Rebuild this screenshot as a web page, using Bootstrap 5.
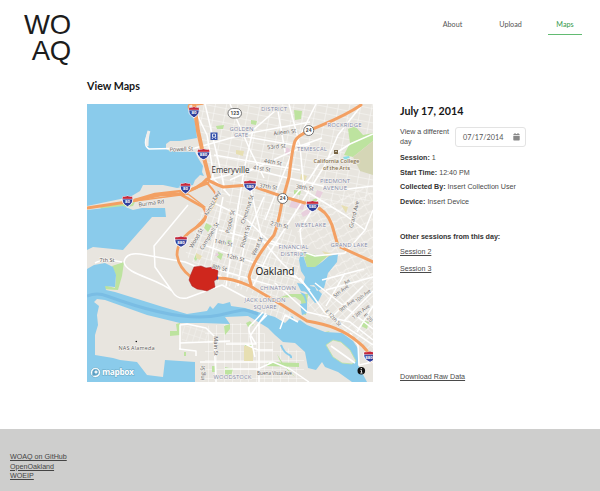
<!DOCTYPE html>
<html lang="en">
<head>
<meta charset="utf-8">
<meta name="viewport" content="width=device-width, initial-scale=1">
<title>WOAQ - View Maps</title>
<link href="https://cdn.jsdelivr.net/npm/bootstrap@5.3.0/dist/css/bootstrap.min.css" rel="stylesheet">
<style>
body{font-family:"Liberation Sans",Arial,sans-serif;font-size:7.15px;color:#4a4a4a;line-height:10px;min-height:491px;overflow:hidden}
header{height:79px;padding:12px 18px 0 22px}
.brand{font-size:27.500px;line-height:26px;color:#1c1c1c;width:49px;letter-spacing:-.2px}
.site-nav{font:7.2px/10px Lato,sans-serif;gap:17px}
.site-nav .nav-link{padding:8px 0 5px;width:41px;text-align:center;color:#555;height:23px;transition:none}
.site-nav .nav-link.active{color:#35994b;border-bottom:1.500px solid #62bb72;width:34px}
h1,h2{font-family:Lato,sans-serif;font-weight:700;color:#161616;margin:0}
h1{font-size:10.700px;line-height:14px;margin-bottom:11px}
h2{font-size:10.700px;line-height:14px}
main{padding-left:87px;height:350px}
.map-box{width:286px;height:278px;flex:none}
.map-box svg{display:block}
.session-panel{width:140px;height:278px;margin-left:27px}
.day-row{margin-top:9px;height:26px}
.day-label{width:55px}
.date-field{width:71px;height:20px;border:1px solid #e3e3e3;border-radius:3px;font:7.200px Lato,sans-serif;letter-spacing:.05px;color:#555;padding:0 5px 0 7px}
.facts p{margin:0 0 4.600px}
b{color:#333}
a{color:#4a4a4a}
.others{margin-top:20.500px}
.others b{letter-spacing:-.02px}
.others a{display:block;width:max-content;margin-top:5px;margin-bottom:7px}
footer{background:#cececd;height:62px;padding:24px 10px;line-height:9.700px}
footer a{display:block;width:max-content;color:#444}
.district{font-family:"Open Sans",sans-serif;font-size:6px;fill:#838bab;text-anchor:middle}
.road-name{font-family:"Open Sans",sans-serif;font-size:5.600px;fill:#5d5d5d;text-anchor:middle}
.halo text{paint-order:stroke;stroke:#f4f1ed;stroke-width:1.300px;stroke-linejoin:round}
</style>
<script src="https://cdn.jsdelivr.net/npm/bootstrap@5.3.0/dist/js/bootstrap.bundle.min.js"></script>
</head>
<body class="d-flex flex-column bg-white">
<header class="d-flex justify-content-between align-items-start">
 <div class="brand text-end">WO<br>AQ</div>
 <nav class="nav site-nav">
  <a class="nav-link" href="#">About</a><a class="nav-link" href="#">Upload</a><a class="nav-link active" href="#">Maps</a>
 </nav>
</header>
<main>
 <h1>View Maps</h1>
 <div class="d-flex">
  <div class="map-box">
<svg width="286" height="278" viewBox="87 104 286 278" role="img" aria-label="Map of Oakland">
<defs>
 <pattern id="gridNorth" width="11" height="7" patternUnits="userSpaceOnUse" patternTransform="rotate(11)"><path d="M0 0H11M0 0V7" stroke="#faf9f7" stroke-width="1.1" fill="none"/></pattern>
 <pattern id="gridWest" width="6" height="7" patternUnits="userSpaceOnUse" patternTransform="rotate(18)"><path d="M0 0H6M0 0V7" stroke="#faf9f7" stroke-width="1.1" fill="none"/></pattern>
 <pattern id="gridEast" width="7" height="9" patternUnits="userSpaceOnUse" patternTransform="rotate(48)"><path d="M0 0H7M0 0V9" stroke="#faf9f7" stroke-width="1.1" fill="none"/></pattern>
 <pattern id="gridSouth" width="8" height="9" patternUnits="userSpaceOnUse"><path d="M0 0H8M0 0V9" stroke="#faf9f7" stroke-width="1" fill="none"/></pattern>
 <pattern id="gridHills" width="9" height="8" patternUnits="userSpaceOnUse" patternTransform="rotate(-28)"><path d="M0 0Q4 3 9 0M0 0V8" stroke="#f8f6f3" stroke-width=".9" fill="none"/></pattern>
 <g id="interstate"><path d="M-4.6-4.5Q-2.5-3.6 0-4.9Q2.5-3.6 4.6-4.5Q7.2 2 0 5.8Q-7.2 2-4.6-4.5Z" fill="#2f3f9b" stroke="#fff" stroke-width=".9"/><path d="M-4.6-4.5Q-2.5-3.6 0-4.9Q2.5-3.6 4.6-4.5L5-2.1H-5Z" fill="#c8283a"/><path d="M-5.2-1.8H5.2" stroke="#fff" stroke-width=".5"/></g>
</defs>
<rect x="87" y="104" width="286" height="278" fill="#e8e5df"/>
<path d="M195 104H373V200L310 212L283 225L230 205L208 185L202 158Z" fill="url(#gridNorth)"/>
<path d="M203 205L283 214L300 245L298 286L275 300L215 282L185 255Z" fill="url(#gridWest)"/>
<path d="M290 210L373 185V285L325 280L338 254L302 245Z" fill="url(#gridHills)"/>
<path d="M322 278L373 272V352L320 318L302 300Z" fill="url(#gridEast)"/>
<path d="M245 296L268 294L296 318L282 322L255 311Z" fill="url(#gridWest)"/>
<path d="M205 326L252 322L278 346L304 352V382H205V344Z" fill="url(#gridSouth)"/>
<path d="M182 325L210 328L212 342L182 343Z" fill="url(#gridWest)" opacity=".6"/>
<!-- parks -->
<g fill="#bde39f">
 <path d="M348 129L355 126L363 135L373 133L373 141L353 157L344 155L350 143Z"/>
 <path d="M294 110L302 111L301 119L295 120ZM251 120L257 121L256 125L251 124ZM206 223L212 226L208 232L204 228ZM294 190L301 191L300 195L294 194ZM312 200L317 198L320 206L314 205ZM228 240L233 241L231 247L226 244ZM218 252L223 254L221 260L217 257ZM196 254L199 255L196 261L194 259ZM216 126L224 125L223 129L217 129Z"/>
 <path d="M302 250L308 253L320 256L330 254L322 261L315 268L307 267Z"/>
 <path d="M112 266L124 262L122 276L118 290L102 289L104 285L115 288L116 276Z"/>
 <path d="M100 207L135 202L133 206L102 211Z"/>
 <path d="M176 324L180 323V335L170 336V331L177 331ZM184 352H186V356H184ZM224 326L230 324V329L225 335ZM212 366H215V372H212ZM246 323L250 321L254 325L248 327ZM245 345H252V357L247 361L244 355ZM268 362L299 363V367L266 366ZM362 320L369 322L367 329L361 326ZM320 333L330 331L325 335L317 338ZM277 354L284 365L295 377L290 373L280 361ZM278 298L290 294L308 294L306 315L302 314L301 301L295 297ZM225 367L233 369L231 376L225 375Z"/>
</g>
<path d="M353 157L373 141V175L360 171Z" fill="#d5d6b6"/>
<g fill="#e7dfb2"><path d="M244 346H253V361H244ZM322 251L333 254L329 259ZM341 205L348 207L346 213ZM236 150L244 151L243 156L236 154ZM225 309L232 310L231 314L225 313ZM301 174L307 176L305 181L300 179ZM196 253L202 256L200 260L196 258Z"/></g>
<g fill="#e8cfdd"><path d="M286 147L290 149L289 155L285 154ZM292 200L305 203L303 210L289 207ZM301 213L309 208L311 213L303 217ZM216 253L219 254L218 256L215 256ZM317 190L323 192L320 198L315 196Z"/></g>
<!-- bay, estuary and lake -->
<g fill="#8acbeb">
 <path d="M87 104H189L190 111L195 121L197 138L180 141H170L166 144V149L170 151L195 152L198 158L203 166L202 172L204 176L200 175L195 180L193 185L177 188L163 185L143 185L140 191L130 197L87 206Z"/>
 <path d="M87 210L123 206L133 210L142 208H165L166 217L152 217L123 250L93 247L87 250Z"/>
 <path d="M87 269L94 265L105 263L113 267L116 275L115 287L105 286L106 290L115 292L163 307L187 314L207 311L210 306L213 309L218 303L223 304L230 302L231 306L245 308L258 312L275 317L285 323L292 316L296 322L300 320L307 325L325 332L342 333L353 341L359 350L358 365L367 382H352L338 372L325 367L322 362L316 370L308 368L305 352L295 343L283 342L275 335L268 328L255 320L248 316L225 317L230 324L203 323L180 323L147 315L105 300L97 299L94 302L99 306L97 315L98 325L95 335V355L113 358L120 360L137 362L147 375L163 377L165 360L195 362V382H87Z"/>
 <path d="M299 260L302 250L304 258L307 267H315L322 262L329 256L338 254L337 262L328 273L324 288L317 291L315 287L305 285L302 288L307 293L315 303L318 302L322 294L318 290L314 285L303 286L305 277L301 271Z"/>
 <path d="M297 283L310 285L308 292L301 291ZM300 292L304 297L306 303L300 304L302 315L307 313V301L305 294Z"/>
 <path d="M343 157L349 156L351 162L346 163Z" fill="#8bdde5"/>
</g>
<path d="M326 345L333 340L341 342L350 350L356 361L352 364L342 363L333 357Z" fill="#e8e5df" stroke="#bde39f" stroke-width=".8"/>
<path d="M331 346L355 363" stroke="#fff" stroke-width="1.6"/>
<path d="M87 296Q97 292 107 296C145 310 190 322 220 315S242 309 258 314" fill="none" stroke="#7abde4" stroke-width="3"/>
<path d="M281 345C286 358 292 353 291 358" fill="none" stroke="#8acbeb" stroke-width="2"/>
<!-- local streets -->
<g fill="none" stroke="#fff" stroke-width="1.5" stroke-linejoin="round">
 <path d="M149 131Q142 145 149 149L195 148L245 134L310 122"/><path d="M149 131Q147 136 147 146" stroke="#f1eeeb" stroke-width="3"/>
 <path d="M95 263Q104 258 122 262M124 262Q126 252 140 254L185 262L222 277M124 262C126 275 158 278 172 291Q177 300 187 298L222 285L250 300M188 205L154 246L155 267L172 291"/>
 <path d="M192 104L207 135L212 165L213 178L230 196M205 104L217 155L225 190M230 104L250 150L264 178M275 111L253 130L245 165L230 255M278 111L285 152M316 104L293 150L265 220M361 106L338 135L325 165L300 205L268 255L253 286M373 134L350 144L319 164L310 178L290 201"/>
 <path d="M208 180L252 169L288 178L340 190L373 186M230 180L284 155L310 144M235 135L300 146L322 138M214 203L245 218L268 240L315 256L345 253L365 230L373 210M289 104L300 146L304 190L345 215L365 230M214 155L300 170M251 190L262 240L282 263L310 290M223 197L211 260M239 201L226 286M264 197L245 240L238 286M219 230L280 246L300 247M204 245L300 279M220 270L290 291M318 200L300 230L302 247"/>
 <path d="M275 283L307 312L350 322L373 340M300 278L325 313L373 345M315 283L373 329M326 290L373 277M326 306L345 273M334 315L363 286M344 321L373 291M357 332L373 306M322 280L364 269"/>
 <path d="M180 349V325L187 324L206 328L214 336L216 382M180 343L230 341M179 349L196 351V356M200 362H273L290 369L309 382M225 369H258L273 362M226 344H256L250 334Q247 327 252 324L263 312M255 357L250 336L266 313M259 382V323L267 315M245 344L258 350H273M280 329L285 315L298 322M350 333L358 345L359 365L373 362"/>
</g>
<!-- freeways -->
<g fill="none" stroke="#f3a063" stroke-linecap="round" stroke-linejoin="round">
 <path d="M87 208L127 202L160 195L180 194Q200 188 207 179Q212 183 223 187L249 185L284 197L312 205Q327 210 332 225L338 246L373 262" stroke-width="3"/>
 <path d="M194 104L198 131L204 158L209 177" stroke-width="4"/>
 <path d="M128 202L155 194L190 190L208 183M180 194Q192 201 203 207Q211 218 197 227Q177 239 177 255Q179 268 191 277" stroke-width="2.7"/>
 <path d="M205 181Q215 191 217 197Q212 212 194 229" stroke-width="2"/>
 <path d="M191 277L218 278Q232 278 250 286L282 305L307 321Q340 326 358 342Q369 350 371 361" stroke-width="3"/>
 <path d="M361 105C332 125 300 130 295 141Q292 150 289 177L282 202Q278 225 274 235Q253 260 249 277L251 285" stroke-width="3"/>
 <path d="M189 110Q186 102 195 105L203 104M135 201L188 194L205 207" stroke-width="1.4"/>
</g>
<path d="M191 274L194 267L201 266L206 268L214 267L218 271L217 279L214 281L215 287L207 291L203 290L197 289L192 286L189 280Z" fill="#cf271d" stroke="#a71e20" stroke-width=".5" stroke-linejoin="round"/>
<!-- route shields -->
<g font-family="Roboto,sans-serif" font-weight="700" text-anchor="middle" font-size="4.4">
 <g transform="translate(194 112)"><use href="#interstate"/><text y="2.4" fill="#fff">80</text></g>
 <g transform="translate(203.500 154)"><use href="#interstate" transform="scale(1.2 1)"/><text y="2.400" fill="#fff">880</text></g>
 <g transform="translate(185.500 188)"><use href="#interstate"/><text y="2.400" fill="#fff">80</text></g>
 <g transform="translate(127.500 201)"><use href="#interstate"/><text y="2.400" fill="#fff">80</text></g>
 <g transform="translate(250 185.500)"><use href="#interstate" transform="scale(1.2 1)"/><text y="2.400" fill="#fff">580</text></g>
 <g transform="translate(312.500 206)"><use href="#interstate" transform="scale(1.2 1)"/><text y="2.400" fill="#fff">580</text></g>
 <g transform="translate(181 241.500)"><use href="#interstate" transform="scale(1.2 1)"/><text y="2.400" fill="#fff">880</text></g>
 <g transform="translate(370 356.500)"><use href="#interstate" transform="scale(1.2 1)"/><text x="-1" y="2.400" fill="#fff">880</text></g>
 <g fill="#fff" stroke="#555" stroke-width=".8"><rect x="228" y="108.500" width="13.500" height="9.500" rx="4.700"/><circle cx="308.700" cy="130.500" r="5"/><circle cx="282.700" cy="198.500" r="5"/></g>
 <g fill="#444" font-size="5"><text x="234.700" y="115.200">123</text><text x="308.700" y="132.400">24</text><text x="282.700" y="200.400">24</text></g>
</g>
<rect x="210.500" y="132.500" width="7" height="7.500" fill="#3551ab"/><path d="M212.500 134H215.500V137H212.500ZM212 139L213 137.500M216 139L215 137.500" fill="none" stroke="#fff" stroke-width=".8"/>
<path d="M334 150H338V154H334Z" fill="#786545"/><path d="M335 151.500H337" stroke="#fff" stroke-width=".6"/>
<path d="M217 276Q220 278 217 280Z" fill="#3551ab"/>
<g class="halo">
 <g class="district">
  <text x="274" y="110.500" textLength="26">DISTRICT</text><text x="241.500" y="130.500" textLength="24">GOLDEN</text><text x="241" y="137.300" textLength="14">GATE</text>
  <text x="344.500" y="126.500" textLength="34">ROCKRIDGE</text><text x="312" y="151" textLength="30">TEMESCAL</text>
  <text x="335" y="182.700" textLength="30">PIEDMONT</text><text x="335" y="189.700" textLength="24">AVENUE</text><text x="310.500" y="227" textLength="31">WESTLAKE</text>
  <text x="293.500" y="249.200" textLength="30">FINANCIAL</text><text x="293.500" y="256" textLength="26">DISTRICT</text><text x="349" y="246.500" textLength="37">GRAND LAKE</text>
  <text x="278" y="290" textLength="36">CHINATOWN</text><text x="265" y="302.200" textLength="41">JACK LONDON</text><text x="265" y="309" textLength="23">SQUARE</text><text x="232.500" y="378.500" textLength="38">WOODSTOCK</text>
 </g>
 <g class="road-name">
  <text transform="translate(181.500 151) rotate(-3)">Powell St</text><text transform="translate(151.500 205) rotate(-7)">Burma Rd</text><text transform="translate(107 262)">7th St</text>
  <text transform="translate(285 134) rotate(-7)">Aileen St</text><text transform="translate(276.500 148.500) rotate(-5)">53rd St</text><text transform="translate(272.500 164) rotate(10)">44th St</text><text transform="translate(261.500 170.500) rotate(9)">41st St</text><text transform="translate(268 188.500) rotate(8)">37th St</text><text transform="translate(304.500 189.500) rotate(8)">38th St</text>
  <text transform="translate(214 204) rotate(-62)" textLength="27">Nimitz Fwy</text><text transform="translate(198 239) rotate(-60)">Wood St</text><text transform="translate(211 237) rotate(-58)">Campbell St</text><text transform="translate(232 222) rotate(-76)">Poplar St</text><text transform="translate(249 210) rotate(-72)">Chestnut St</text><text transform="translate(247 237) rotate(-74)">Filbert St</text><text transform="translate(259 247) rotate(-65)">West St</text>
  <text transform="translate(279 227) rotate(12)">27th St</text><text transform="translate(223 244.500) rotate(12)">14th St</text><text transform="translate(235 259.500) rotate(14)">12th St</text><text transform="translate(219 269.500) rotate(14)">8th St</text><text transform="translate(356 215) rotate(-76)">Grand Ave</text>
  <g font-size="5.100" style="font-size:5.100px"><text transform="translate(342 292.500) rotate(-38)">5th Ave</text><text transform="translate(348 306.500) rotate(-38)">9th Ave</text><text transform="translate(364 297) rotate(-38)" textLength="18" lengthAdjust="spacingAndGlyphs">10th Ave</text><text transform="translate(362 313) rotate(-38)">13th Ave</text><text transform="translate(332 319) rotate(47)">E 12th St</text><text transform="translate(367 319) rotate(45)">E 20</text>
  <text transform="translate(348 283) rotate(-38)" textLength="6" lengthAdjust="spacingAndGlyphs">Ave</text></g><text transform="translate(214 346) rotate(90)">Main St</text><text transform="translate(204.500 373) rotate(-88)">ing St</text><text x="274.500" y="375" textLength="35" lengthAdjust="spacingAndGlyphs">Buena Vista Ave</text><text x="136.500" y="349.500" textLength="36">NAS Alameda</text>
 </g>
 <g font-family="Open Sans,sans-serif" text-anchor="middle"><g font-size="5.800" font-weight="600" fill="#85714e"><text x="336.500" y="162.500" textLength="46" lengthAdjust="spacingAndGlyphs">California College</text><text x="336.500" y="169.500" textLength="27">of the Arts</text></g>
 <text x="230.500" y="173" font-size="8.300" fill="#333" textLength="38" lengthAdjust="spacingAndGlyphs" font-weight="500">Emeryville</text><text x="275" y="274.500" font-size="11" fill="#111" textLength="39" lengthAdjust="spacingAndGlyphs" font-weight="500">Oakland</text></g>
</g>
<circle cx="136.300" cy="341.500" r=".8" fill="#111"/>
<g fill="none" stroke="#62a5c3" stroke-width=".6"><circle cx="95.500" cy="372.500" r="5" fill="#fff"/><path d="M92.600 375.400V371.700A3 3 0 1 1 95.800 375.300Z" fill="#589ec4"/><path d="M96 369.600L96.700 371.300L98.400 372L96.700 372.700L96 374.400L95.300 372.700L93.600 372L95.300 371.300Z" fill="#fff" stroke="none"/></g>
<text x="102" y="375.300" font-family="Open Sans,sans-serif" font-size="8.500" font-weight="700" textLength="32" fill="#fff" stroke="#68a8c5" stroke-width="1" paint-order="stroke">mapbox</text>
<circle cx="361.300" cy="370.700" r="3.800" fill="#111"/><circle cx="361.300" cy="368.600" r=".7" fill="#fff"/><path d="M360.400 370.300H361.500V372.800M360.300 373H362.500" fill="none" stroke="#fff" stroke-width=".9"/>
</svg>
  </div>
  <aside class="session-panel d-flex flex-column">
   <h2>July 17, 2014</h2>
   <div class="day-row d-flex"><div class="day-label">View a different<br>day</div>
    <div class="date-field d-flex align-items-center justify-content-between"><span>07/17/2014</span><svg width="7" height="8" viewBox="0 0 7 8" fill="#888"><path d="M1 1h.5V0h1v1h2V0h1v1H6q.7 0 .7.700V2.300H.3V1.700Q.3 1 1 1ZM.3 2.900H6.700V6.800q0 .700-.7.700H1q-.7 0-.7-.700Z"/></svg></div></div>
   <div class="facts"><p><b>Session:</b> 1</p><p><b>Start Time:</b> 12:40 PM</p><p><b>Collected By:</b> Insert Collection User</p><p><b>Device:</b> Insert Device</p></div>
   <div class="others"><b>Other sessions from this day:</b><a href="#">Session 2</a><a href="#">Session 3</a></div>
   <a class="mt-auto" href="#">Download Raw Data</a>
  </aside>
 </div>
</main>
<footer><a href="#">WOAQ on GitHub</a><a href="#">OpenOakland</a><a href="#">WOEIP</a></footer>
</body>
</html>
